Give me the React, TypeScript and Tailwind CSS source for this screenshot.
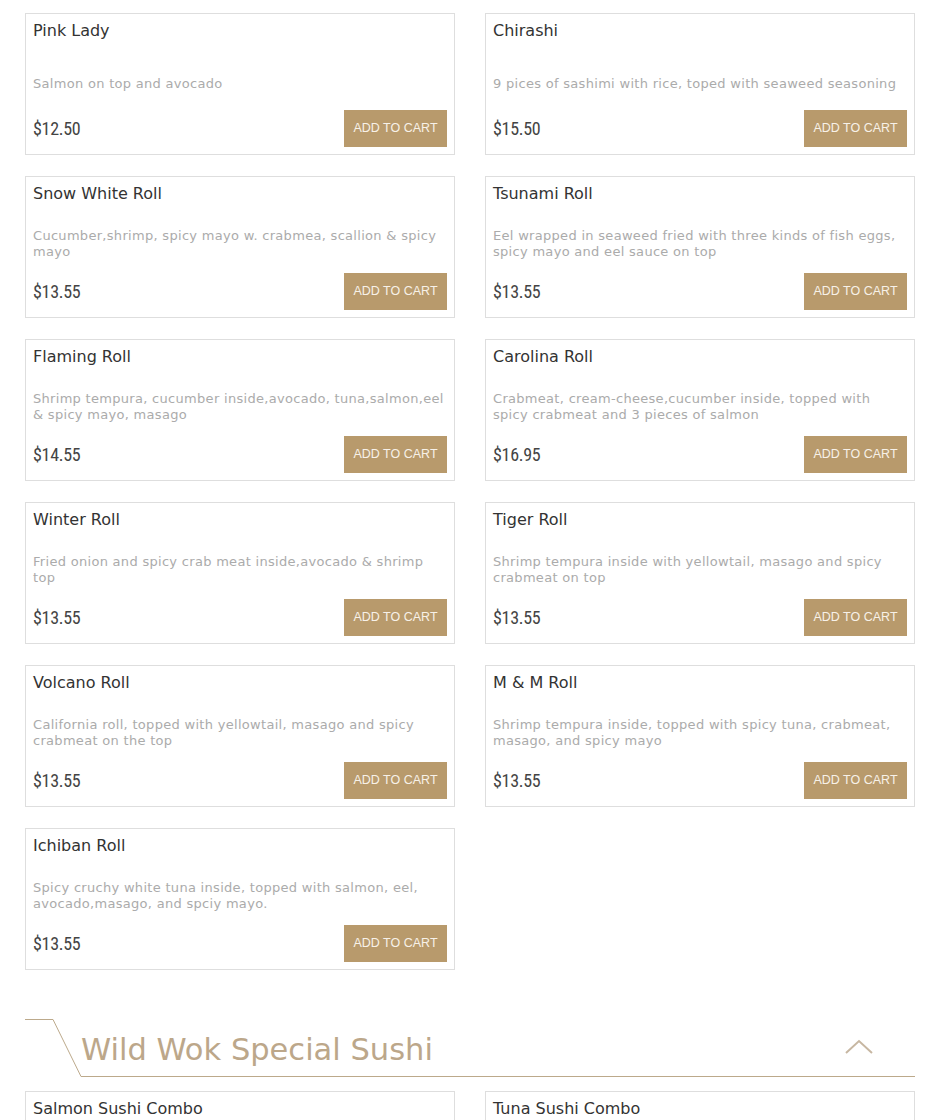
import React from "react";

type Item = { name: string; desc: string[]; price: string };

const items: Item[] = [
  { name: "Pink Lady", desc: ["Salmon on top and avocado"], price: "$12.50" },
  { name: "Chirashi", desc: ["9 pices of sashimi with rice, toped with seaweed seasoning"], price: "$15.50" },
  { name: "Snow White Roll", desc: ["Cucumber,shrimp, spicy mayo w. crabmea, scallion & spicy", "mayo"], price: "$13.55" },
  { name: "Tsunami Roll", desc: ["Eel wrapped in seaweed fried with three kinds of fish eggs,", "spicy mayo and eel sauce on top"], price: "$13.55" },
  { name: "Flaming Roll", desc: ["Shrimp tempura, cucumber inside,avocado, tuna,salmon,eel", "& spicy mayo, masago"], price: "$14.55" },
  { name: "Carolina Roll", desc: ["Crabmeat, cream-cheese,cucumber inside, topped with", "spicy crabmeat and 3 pieces of salmon"], price: "$16.95" },
  { name: "Winter Roll", desc: ["Fried onion and spicy crab meat inside,avocado & shrimp", "top"], price: "$13.55" },
  { name: "Tiger Roll", desc: ["Shrimp tempura inside with yellowtail, masago and spicy", "crabmeat on top"], price: "$13.55" },
  { name: "Volcano Roll", desc: ["California roll, topped with yellowtail, masago and spicy", "crabmeat on the top"], price: "$13.55" },
  { name: "M & M Roll", desc: ["Shrimp tempura inside, topped with spicy tuna, crabmeat,", "masago, and spicy mayo"], price: "$13.55" },
  { name: "Ichiban Roll", desc: ["Spicy cruchy white tuna inside, topped with salmon, eel,", "avocado,masago, and spciy mayo."], price: "$13.55" },
];

const round = { fontFamily: '"DejaVu Sans", Verdana, sans-serif' };
const priceFont = { fontFamily: '"Liberation Sans Narrow", "Roboto Condensed", Roboto, sans-serif' };
const btnFont = { fontFamily: '"Liberation Sans", Arial, sans-serif' };

function Card({ item }: { item: Item }) {
  return (
    <div className="flex h-[142px] flex-col border border-[#dedede] bg-white pl-[7px] pr-[7px] pt-[5px] pb-[7px]">
      <div className="text-[16px] leading-[24px] text-[#333333]" style={round}>
        {item.name}
      </div>
      <div
        className={
          (item.desc.length === 1 ? "mt-[33px] " : "mt-[22px] ") +
          "text-[13px] leading-[16px] tracking-[0.3px] text-[#ababab]"
        }
        style={round}
      >
        {item.desc.map((l, i) => (
          <div key={i} className="whitespace-nowrap">
            {l}
          </div>
        ))}
      </div>
      <div className="mt-auto flex items-center justify-between">
        <div className="text-[18px] tracking-[-0.3px] text-[#444444]" style={priceFont}>
          {item.price}
        </div>
        <button
          className="flex h-[37px] w-[103px] items-center justify-center bg-[#b89a6c] text-[12.5px] text-[#f7f1e8]"
          style={btnFont}
        >
          ADD TO CART
        </button>
      </div>
    </div>
  );
}

function SectionHeader({ title }: { title: string }) {
  return (
    <div className="relative flex h-[58px] items-center justify-between pl-[56px] pr-[42px]">
      <svg
        className="pointer-events-none absolute left-0 top-0"
        width="890"
        height="58"
        viewBox="0 0 890 58"
        fill="none"
      >
        <polyline
          points="0,0.5 28,0.5 56,57.5 890,57.5"
          stroke="#bca98b"
          strokeWidth="1"
          fill="none"
        />
      </svg>
      <h2 className="pt-[3px] text-[30.5px] text-[#bca78a]" style={round}>
        {title}
      </h2>
      <svg width="28" height="16" viewBox="0 0 28 16" fill="none" className="mt-[-2px]">
        <polyline points="1,14 14,2 27,14" stroke="#c7b7a2" strokeWidth="2" fill="none" />
      </svg>
    </div>
  );
}

export default function App() {
  return (
    <div className="min-h-[1120px] w-[950px] bg-white">
      <div className="ml-[25px] w-[890px] pt-[13px]">
        <div className="grid grid-cols-2 gap-x-[30px] gap-y-[21px]">
          {items.map((it) => (
            <Card key={it.name} item={it} />
          ))}
        </div>
        <div className="mt-[49px]">
          <SectionHeader title="Wild Wok Special Sushi" />
        </div>
        <div className="mt-[14px] grid grid-cols-2 gap-x-[30px]">
          <div className="h-[142px] border border-[#dedede] pl-[7px] pt-[5px]">
            <div className="text-[16px] leading-[24px] text-[#333333]" style={round}>
              Salmon Sushi Combo
            </div>
          </div>
          <div className="h-[142px] border border-[#dedede] pl-[7px] pt-[5px]">
            <div className="text-[16px] leading-[24px] text-[#333333]" style={round}>
              Tuna Sushi Combo
            </div>
          </div>
        </div>
      </div>
    </div>
  );
}
